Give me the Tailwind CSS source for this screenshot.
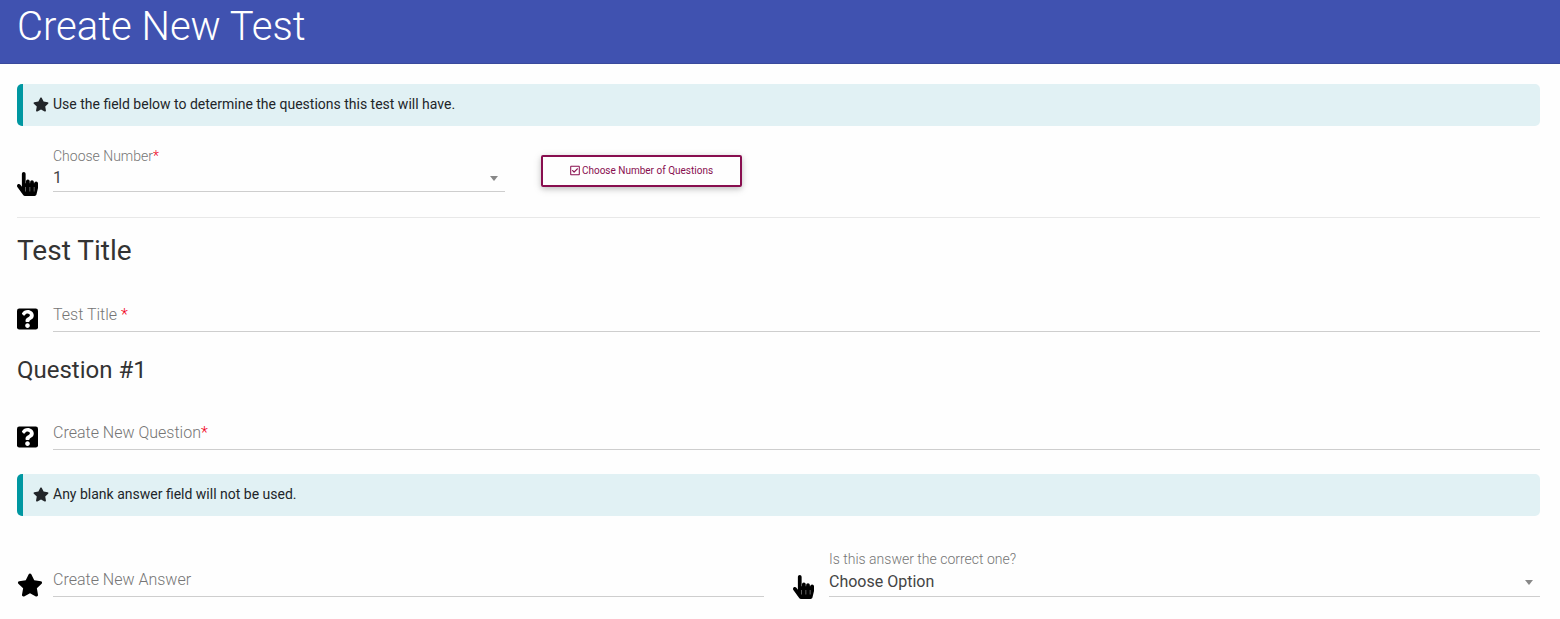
<!DOCTYPE html>
<html lang="en">
<head>
<meta charset="utf-8">
<meta name="viewport" content="width=device-width, initial-scale=1">
<title>Create New Test</title>
<script src="https://cdn.jsdelivr.net/npm/@tailwindcss/browser@4"></script>
</head>
<body class="bg-[#fefefe] font-['Roboto',sans-serif] text-[#212529]">
<svg class="hidden" aria-hidden="true">
  <symbol id="star" viewBox="0 0 576 512"><path d="M259.3 17.8L194 150.2 47.9 171.5c-26.2 3.8-36.7 36.1-17.7 54.6l105.7 103-25 145.5c-4.5 26.3 23.2 46 46.4 33.7L288 439.6l130.7 68.7c23.2 12.2 50.9-7.4 46.4-33.7l-25-145.5 105.7-103c19-18.5 8.5-50.8-17.7-54.6L382 150.2 316.7 17.8c-11.7-23.6-45.6-23.9-57.4 0z"/></symbol>
  <symbol id="pointer" viewBox="0 0 448 512"><path d="M448 240v96c0 3.084-.356 6.159-1.063 9.162l-32 136C410.686 499.23 394.562 512 376 512H168a40.004 40.004 0 0 1-32.35-16.473l-127.997-176c-12.993-17.866-9.043-42.883 8.822-55.876 17.867-12.994 42.884-9.043 55.877 8.823L104 315.992V40c0-22.091 17.908-40 40-40s40 17.909 40 40v200h8v-40c0-22.091 17.908-40 40-40s40 17.909 40 40v40h8v-24c0-22.091 17.908-40 40-40s40 17.909 40 40v24h8c0-22.091 17.908-40 40-40s40 17.909 40 40zm-256 80h-8v96h8v-96zm88 0h-8v96h8v-96zm88 0h-8v96h8v-96z"/></symbol>
  <symbol id="question" viewBox="0 0 448 512"><rect y="32" width="448" height="448" rx="48"/><path fill="#fff" transform="translate(86 64) scale(.72 .75)" d="M202.021 0C122.202 0 70.503 32.703 29.914 91.026c-7.363 10.58-5.093 25.086 5.178 32.874l43.138 32.709c10.373 7.865 25.132 6.026 33.253-4.148 25.049-31.381 43.63-49.449 82.757-49.449 30.764 0 68.816 19.799 68.816 49.631 0 22.552-18.617 34.134-48.993 51.164-35.423 19.86-82.299 44.576-82.299 106.405V320c0 13.255 10.745 24 24 24h72.471c13.255 0 24-10.745 24-24v-5.773c0-42.86 125.268-44.645 125.268-160.627C377.504 66.256 286.902 0 202.021 0zM192 373.459c-38.196 0-69.271 31.075-69.271 69.271 0 38.195 31.075 69.27 69.271 69.27s69.271-31.075 69.271-69.271-31.075-69.27-69.271-69.27z"/></symbol>
  <symbol id="check" viewBox="0 0 448 512"><path d="M400 32H48C21.49 32 0 53.49 0 80v352c0 26.51 21.49 48 48 48h352c26.51 0 48-21.49 48-48V80c0-26.51-21.49-48-48-48zm0 400H48V80h352v352zm-35.864-241.724L191.547 361.48c-4.705 4.667-12.303 4.637-16.97-.068l-90.781-91.516c-4.667-4.705-4.637-12.303.069-16.971l22.719-22.536c4.705-4.667 12.303-4.637 16.97.069l59.792 60.277 141.352-140.216c4.705-4.667 12.303-4.637 16.97.068l22.536 22.718c4.667 4.706 4.637 12.304-.068 16.971z"/></symbol>
  <symbol id="caret" viewBox="0 0 8 5"><path d="M0 0h8L4 5z"/></symbol>
</svg>

<header class="border-b border-[#3a4a9c] bg-[#4052b0] px-[17px] pt-[3px] pb-3">
  <h1 class="text-[40px] leading-12 font-light text-white">Create New Test</h1>
</header>

<main class="pt-5 pr-5 pb-5 pl-[17px]">
  <p class="flex items-center gap-1 rounded-[5px] border-l-6 border-[#0097a1] bg-[#e1f1f4] py-2.5 pb-3 pl-2.5 text-sm leading-5">
    <svg class="h-[15px] w-4 fill-current" aria-hidden="true"><use href="#star"/></svg>Use the field below to determine the questions this test will have.
  </p>

  <form>
    <div class="flex gap-9 border-b border-[#e8e8e8] pt-5 pb-[25px]">
      <div class="flex w-[488px] items-end gap-[15px]">
        <svg class="-mb-1 h-6 w-[21px] shrink-0" aria-hidden="true"><use href="#pointer"/></svg>
        <div class="min-w-0 grow">
          <label for="count" class="block text-[14px] leading-5 font-light text-[#757575]">Choose Number<span class="text-[#f00020]">*</span></label>
          <div class="grid items-center border-b border-[#cecece]">
            <select id="count" class="col-start-1 row-start-1 h-[25px] w-full appearance-none bg-transparent pb-1.5 text-base text-[#444] outline-none"><option>1</option><option>2</option><option>3</option></select>
            <svg class="pointer-events-none col-start-1 row-start-1 mr-[7px] h-[5px] w-2 justify-self-end fill-[#888]" aria-hidden="true"><use href="#caret"/></svg>
          </div>
        </div>
      </div>
      <button type="button" class="mt-[9px] flex h-8 w-[201px] items-center justify-center gap-0.5 rounded-xs border-2 border-[#880e4f] pb-0.5 text-[10px] text-[#880e4f] shadow-[0_2px_5px_rgba(0,0,0,0.16),0_2px_10px_rgba(0,0,0,0.12)]">
        <svg class="h-[11px] w-[10px] fill-current" aria-hidden="true"><use href="#check"/></svg>Choose Number of Questions
      </button>
    </div>

    <h2 class="pt-[15px] text-[28px] leading-9 text-[#333]">Test Title</h2>
    <div class="mt-[26px] flex items-end gap-[15px]">
      <svg class="mb-px h-6 w-[21px] shrink-0" aria-hidden="true"><use href="#question"/></svg>
      <div class="grid grow border-b border-[#cecece]">
        <input id="title" type="text" class="col-start-1 row-start-1 h-9 w-full bg-transparent outline-none">
        <label for="title" class="pointer-events-none col-start-1 row-start-1 pt-2 text-base leading-6 font-light text-[#757575]">Test Title <span class="text-[#f00020]">*</span></label>
      </div>
    </div>

    <h3 class="pt-[22px] text-2xl leading-8 text-[#333]">Question #1</h3>
    <div class="mt-[27px] flex items-end gap-[15px]">
      <svg class="mb-px h-6 w-[21px] shrink-0" aria-hidden="true"><use href="#question"/></svg>
      <div class="grid grow border-b border-[#cecece]">
        <input id="question-1" type="text" class="col-start-1 row-start-1 h-9 w-full bg-transparent outline-none">
        <label for="question-1" class="pointer-events-none col-start-1 row-start-1 pt-2 text-base leading-6 font-light text-[#757575]">Create New Question<span class="text-[#f00020]">*</span></label>
      </div>
    </div>

    <p class="mt-6 flex items-center gap-1 rounded-[5px] border-l-6 border-[#0097a1] bg-[#e1f1f4] py-2.5 pb-3 pl-2.5 text-sm leading-5">
      <svg class="h-[15px] w-4 fill-current" aria-hidden="true"><use href="#star"/></svg>Any blank answer field will not be used.
    </p>

    <div class="mt-[33px] grid grid-cols-2 items-end gap-[29px]">
      <div class="flex items-end gap-2.5">
        <svg class="h-6 w-[26px] shrink-0" aria-hidden="true"><use href="#star"/></svg>
        <div class="grid grow border-b border-[#cecece]">
          <input id="answer" type="text" class="col-start-1 row-start-1 h-9 w-full bg-transparent outline-none">
          <label for="answer" class="pointer-events-none col-start-1 row-start-1 pt-2 text-base leading-6 font-light text-[#757575]">Create New Answer</label>
        </div>
      </div>
      <div class="flex items-end gap-[15px]">
        <svg class="-mb-0.5 h-6 w-[21px] shrink-0" aria-hidden="true"><use href="#pointer"/></svg>
        <div class="min-w-0 grow">
          <label for="correct" class="block text-[14px] leading-5 font-light text-[#757575]">Is this answer the correct one?</label>
          <div class="grid items-center border-b border-[#cecece]">
            <select id="correct" class="col-start-1 row-start-1 h-[27px] w-full appearance-none bg-transparent pb-0.5 text-base text-[#444] outline-none"><option>Choose Option</option><option>Yes</option><option>No</option></select>
            <svg class="pointer-events-none col-start-1 row-start-1 mr-[7px] h-[5px] w-2 justify-self-end fill-[#888]" aria-hidden="true"><use href="#caret"/></svg>
          </div>
        </div>
      </div>
    </div>
  </form>
</main>
</body>
</html>
